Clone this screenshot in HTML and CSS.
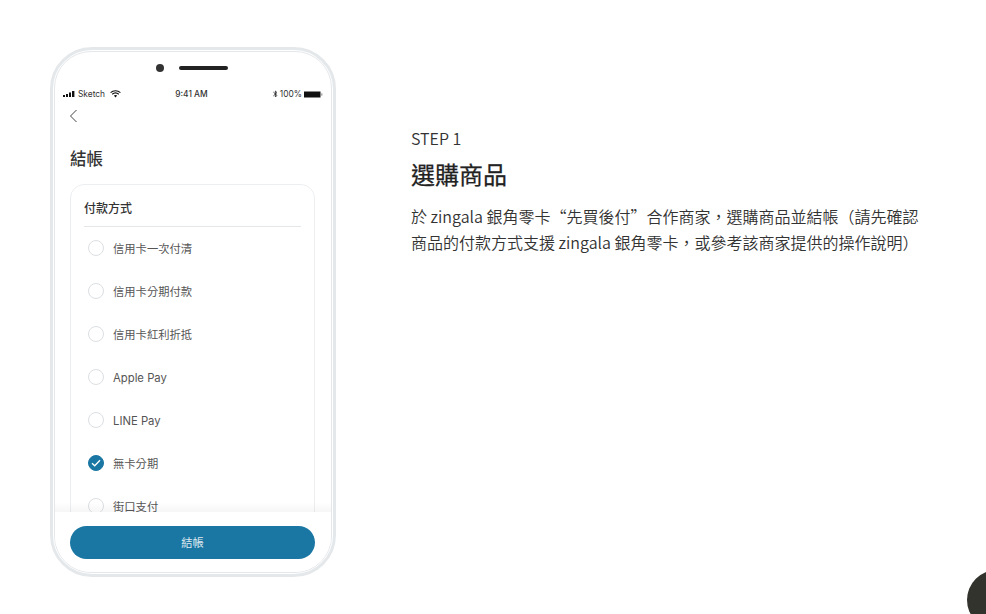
FILE: index.html
```html
<!DOCTYPE html>
<html lang="zh-Hant">
<head>
<meta charset="utf-8">
<title>STEP 1</title>
<link rel="stylesheet" href="styles.css">
</head>
<body>
<main class="page">
  <div class="phone">
    <div class="screen">
      <div class="notch"><span class="camera"></span><span class="speaker"></span></div>
      <div class="status">
        <div class="status-left">
          <svg class="signal" width="13" height="6" viewBox="0 0 13 6"><rect x="0" y="4" width="2" height="2"/><rect x="3" y="3" width="2" height="3"/><rect x="6" y="1.5" width="2" height="4.5"/><rect x="9" y="0" width="2.4" height="6"/></svg>
          <span>Sketch</span>
          <svg class="wifi" width="11" height="8" viewBox="0 0 11 8"><path d="M.6 2.6C3.4.1 7.6.1 10.4 2.6M2.2 4.2c1.9-1.6 4.7-1.6 6.6 0" fill="none" stroke="#111" stroke-width="1.2"/><path d="M3.8 5.6c1-.8 2.4-.8 3.4 0L5.5 7.6z" fill="#111"/></svg>
        </div>
        <div class="status-time">9:41 AM</div>
        <div class="status-right">
          <svg width="5" height="8" viewBox="0 0 5 8"><path d="M.4 2.1 4 5.4 2.4 7V1L4 2.6.4 5.9" fill="none" stroke="#222" stroke-width=".8"/></svg>
          <span>100%</span>
          <svg width="19" height="7" viewBox="0 0 19 7"><rect x="0" y="0.5" width="16.5" height="6" fill="#111"/><rect x="17.2" y="2.3" width="1.2" height="2.4" fill="#999"/></svg>
        </div>
      </div>
      <div class="nav">
        <svg width="9" height="14" viewBox="0 0 9 14"><path d="M7.5 1 1.5 7l6 6" fill="none" stroke="#444" stroke-width="1"/></svg>
      </div>
      <h1 class="title">結帳</h1>
      <section class="card">
        <h2 class="card-title">付款方式</h2>
        <ul class="options">
          <li class="option"><span class="radio"></span><span>信用卡一次付清</span></li>
          <li class="option"><span class="radio"></span><span>信用卡分期付款</span></li>
          <li class="option"><span class="radio"></span><span>信用卡紅利折抵</span></li>
          <li class="option"><span class="radio"></span><span class="latin">Apple Pay</span></li>
          <li class="option"><span class="radio"></span><span class="latin">LINE Pay</span></li>
          <li class="option"><span class="radio checked"><svg width="10" height="8" viewBox="0 0 10 8"><path d="M1 4.2 3.7 6.8 9 1.2" fill="none" stroke="#fff" stroke-width="1.3"/></svg></span><span>無卡分期</span></li>
          <li class="option"><span class="radio"></span><span>街口支付</span></li>
        </ul>
      </section>
      <div class="footer"><button class="pay" type="button">結帳</button></div>
    </div>
  </div>
  <div class="copy">
    <p class="step">STEP 1</p>
    <h2 class="heading">選購商品</h2>
    <p class="desc">於 zingala 銀角零卡“先買後付”合作商家，選購商品並結帳（請先確認商品的付款方式支援 zingala 銀角零卡，或參考該商家提供的操作說明）</p>
  </div>
</main>
<div class="fab"></div>
</body>
</html>
```
FILE: styles.css
```css
* { box-sizing: border-box; }
html, body { margin: 0; height: 100%; overflow: hidden; background: #fff; }
body { font-family: "Noto Sans CJK TC", "Noto Sans", sans-serif; color: #333; }
.page { display: flex; align-items: flex-start; padding: 47px 0 0 50px; }
.phone {
  width: 286px; height: 530px; flex: none;
  border: 3px solid #e5e8eb; border-radius: 42px;
  padding: 1px; background: #fff;
}
.screen {
  position: relative; height: 100%; overflow: hidden;
  border: 1px solid #e5e8eb; border-radius: 37px; background: #fff; padding: 0 15px;
  font-family: Inter, "Noto Sans CJK TC", sans-serif;
}
.notch { display: flex; align-items: center; justify-content: center; gap: 15px; height: 30px; padding-top: 2px; margin-left: -2px; }
.camera { width: 8px; height: 8px; border-radius: 50%; background: #333; }
.speaker { width: 49px; height: 4px; border-radius: 2px; background: #222; }
.status {
  display: grid; grid-template-columns: 1fr auto 1fr; align-items: center;
  height: 14px; margin: 5px -8px 0 -7px; font-size: 8.4px; color: #333;
}
.status-left { display: flex; align-items: center; gap: 2px; }
.status-left .wifi { margin-left: 3px; }
.status-right { display: flex; align-items: center; justify-content: flex-end; gap: 2px; padding-right: 1px; }
.status-time { font-weight: 500; margin-right: 4px; }
.signal { fill: #111; }
.nav { height: 14px; margin-top: 8px; margin-left: -1px; display: flex; align-items: center; }
.title { margin: 23px 0 0; font-size: 16.5px; line-height: 24px; font-weight: 500; color: #333; font-family: "Noto Sans CJK TC", sans-serif; }
.card {
  margin-top: 14px; width: 245px; padding: 13px 13px 0; height: 380px;
  border: 1px solid #eceef0; border-radius: 14px;
}
.card-title {
  margin: 0; height: 29px; font-size: 12px; line-height: 19px; font-weight: 500; color: #333;
  border-bottom: 1px solid #e4e7e9; font-family: "Noto Sans CJK TC", sans-serif;
}
.options { list-style: none; margin: -1px 0 0; padding: 0; }
.option {
  display: flex; align-items: center; gap: 9px; height: 43px;
  padding-left: 4px; font-size: 11.3px; color: #555;
}
.latin { margin-top: 2px; }
.radio {
  width: 16px; height: 16px; flex: none; border-radius: 50%; border: 1px solid #dcdfe2;
  display: flex; align-items: center; justify-content: center;
}
.radio.checked { background: #1a76a3; border-color: #1a76a3; }
.footer {
  position: absolute; left: 0; right: 0; bottom: 0; height: 60px; padding: 14px 15px 0;
  background: #fff;
}
.footer::before {
  content: ""; position: absolute; left: 0; right: 0; top: -10px; height: 10px;
  background: linear-gradient(to bottom, rgba(0,0,0,0), rgba(0,0,0,.035));
}
.pay {
  display: block; width: 245px; height: 33px; padding: 0 0 2px; border: 0; border-radius: 17px; background: #1a76a3;
  color: #dfe9ef; font: 400 11.3px "Noto Sans CJK TC", sans-serif;
}
.copy { width: 515px; margin: 79px 0 0 75px; }
.step { margin: 0; font-size: 16px; line-height: 24px; font-weight: 350; color: #333; }
.heading { margin: 6px 0 0; font-size: 24px; line-height: 36px; font-weight: 400; color: #222; -webkit-text-stroke: .25px #222; }
.desc { margin: 11px 0 0; font-size: 16px; line-height: 26px; font-weight: 350; color: #333; }
.fab { position: fixed; left: 967px; top: 570px; width: 60px; height: 60px; border-radius: 50%; background: #33332e; }
```
